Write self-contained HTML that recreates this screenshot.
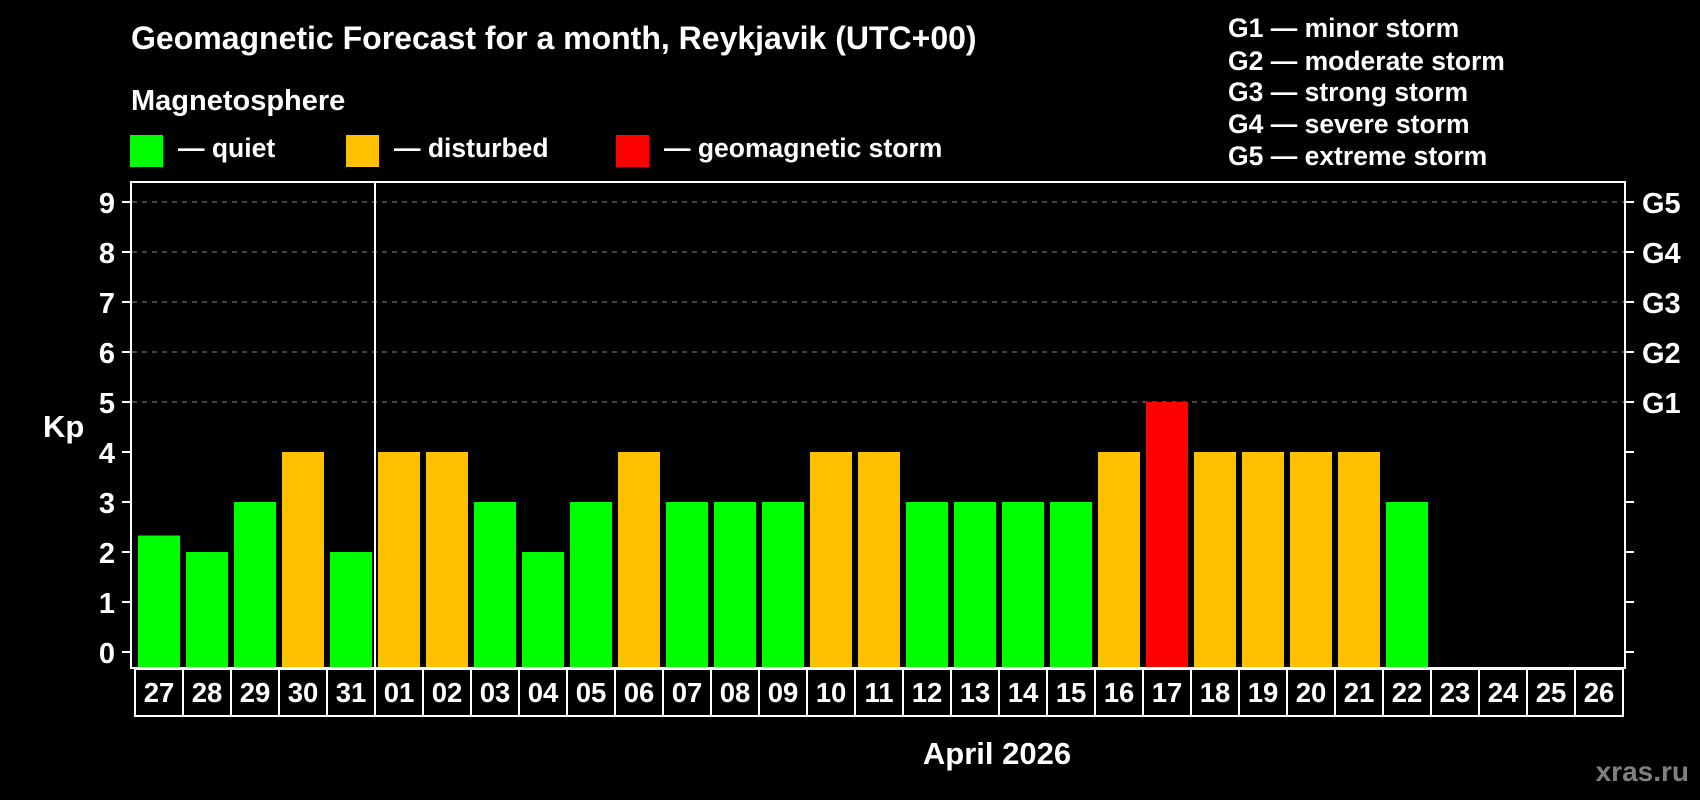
<!DOCTYPE html>
<html><head><meta charset="utf-8"><style>
html,body{margin:0;padding:0;background:#000;}
svg{display:block}
text{font-family:"Liberation Sans",Arial,sans-serif;font-weight:bold;fill:#fff}
</style></head><body>
<svg width="1700" height="800" viewBox="0 0 1700 800" xmlns="http://www.w3.org/2000/svg">
<rect width="1700" height="800" fill="#000"/>
<text x="131" y="49" font-size="32">Geomagnetic Forecast for a month, Reykjavik (UTC+00)</text>
<text x="131" y="110" font-size="29">Magnetosphere</text>
<rect x="130" y="135" width="33" height="32" fill="#00ff00"/>
<text x="178" y="157" font-size="26.5">— quiet</text>
<rect x="346" y="135" width="33" height="32" fill="#ffc000"/>
<text x="394" y="157" font-size="26.5">— disturbed</text>
<rect x="616" y="135" width="33" height="32" fill="#ff0000"/>
<text x="664" y="157" font-size="26.5">— geomagnetic storm</text>
<g font-size="26.5">
<text x="1228" y="37">G1 — minor storm</text>
<text x="1228" y="70">G2 — moderate storm</text>
<text x="1228" y="101">G3 — strong storm</text>
<text x="1228" y="133">G4 — severe storm</text>
<text x="1228" y="165">G5 — extreme storm</text>
</g>
<g stroke="#888" stroke-width="1" stroke-dasharray="5,5">
<line x1="132" x2="1624" y1="202" y2="202"/>
<line x1="132" x2="1624" y1="252" y2="252"/>
<line x1="132" x2="1624" y1="302" y2="302"/>
<line x1="132" x2="1624" y1="352" y2="352"/>
<line x1="132" x2="1624" y1="402" y2="402"/>
</g>
<g>
<rect x="138" y="535.5" width="42" height="132.5" fill="#00ff00"/>
<rect x="186" y="552" width="42" height="116" fill="#00ff00"/>
<rect x="234" y="502" width="42" height="166" fill="#00ff00"/>
<rect x="282" y="452" width="42" height="216" fill="#ffc000"/>
<rect x="330" y="552" width="42" height="116" fill="#00ff00"/>
<rect x="378" y="452" width="42" height="216" fill="#ffc000"/>
<rect x="426" y="452" width="42" height="216" fill="#ffc000"/>
<rect x="474" y="502" width="42" height="166" fill="#00ff00"/>
<rect x="522" y="552" width="42" height="116" fill="#00ff00"/>
<rect x="570" y="502" width="42" height="166" fill="#00ff00"/>
<rect x="618" y="452" width="42" height="216" fill="#ffc000"/>
<rect x="666" y="502" width="42" height="166" fill="#00ff00"/>
<rect x="714" y="502" width="42" height="166" fill="#00ff00"/>
<rect x="762" y="502" width="42" height="166" fill="#00ff00"/>
<rect x="810" y="452" width="42" height="216" fill="#ffc000"/>
<rect x="858" y="452" width="42" height="216" fill="#ffc000"/>
<rect x="906" y="502" width="42" height="166" fill="#00ff00"/>
<rect x="954" y="502" width="42" height="166" fill="#00ff00"/>
<rect x="1002" y="502" width="42" height="166" fill="#00ff00"/>
<rect x="1050" y="502" width="42" height="166" fill="#00ff00"/>
<rect x="1098" y="452" width="42" height="216" fill="#ffc000"/>
<rect x="1146" y="402" width="42" height="266" fill="#ff0000"/>
<rect x="1194" y="452" width="42" height="216" fill="#ffc000"/>
<rect x="1242" y="452" width="42" height="216" fill="#ffc000"/>
<rect x="1290" y="452" width="42" height="216" fill="#ffc000"/>
<rect x="1338" y="452" width="42" height="216" fill="#ffc000"/>
<rect x="1386" y="502" width="42" height="166" fill="#00ff00"/>
</g>
<rect x="131" y="182" width="1494" height="486" fill="none" stroke="#fff" stroke-width="2"/>
<line x1="375" x2="375" y1="182" y2="716" stroke="#fff" stroke-width="2"/>
<g stroke="#fff" stroke-width="2">
<line x1="122" x2="131" y1="652" y2="652"/><line x1="1625" x2="1634" y1="652" y2="652"/>
<line x1="122" x2="131" y1="602" y2="602"/><line x1="1625" x2="1634" y1="602" y2="602"/>
<line x1="122" x2="131" y1="552" y2="552"/><line x1="1625" x2="1634" y1="552" y2="552"/>
<line x1="122" x2="131" y1="502" y2="502"/><line x1="1625" x2="1634" y1="502" y2="502"/>
<line x1="122" x2="131" y1="452" y2="452"/><line x1="1625" x2="1634" y1="452" y2="452"/>
<line x1="122" x2="131" y1="402" y2="402"/><line x1="1625" x2="1634" y1="402" y2="402"/>
<line x1="122" x2="131" y1="352" y2="352"/><line x1="1625" x2="1634" y1="352" y2="352"/>
<line x1="122" x2="131" y1="302" y2="302"/><line x1="1625" x2="1634" y1="302" y2="302"/>
<line x1="122" x2="131" y1="252" y2="252"/><line x1="1625" x2="1634" y1="252" y2="252"/>
<line x1="122" x2="131" y1="202" y2="202"/><line x1="1625" x2="1634" y1="202" y2="202"/>
</g>
<g font-size="29" text-anchor="end">
<text x="115" y="663">0</text><text x="115" y="613">1</text><text x="115" y="563">2</text>
<text x="115" y="513">3</text><text x="115" y="463">4</text><text x="115" y="413">5</text>
<text x="115" y="363">6</text><text x="115" y="313">7</text><text x="115" y="263">8</text>
<text x="115" y="213">9</text>
</g>
<g font-size="29">
<text x="1642" y="413">G1</text><text x="1642" y="363">G2</text><text x="1642" y="313">G3</text>
<text x="1642" y="263">G4</text><text x="1642" y="213">G5</text>
</g>
<text x="43" y="437" font-size="31">Kp</text>
<g fill="none" stroke="#fff" stroke-width="2">
<rect x="135" y="669" width="1488" height="47"/>
<line x1="183" x2="183" y1="669" y2="716"/><line x1="231" x2="231" y1="669" y2="716"/>
<line x1="279" x2="279" y1="669" y2="716"/><line x1="327" x2="327" y1="669" y2="716"/>
<line x1="423" x2="423" y1="669" y2="716"/><line x1="471" x2="471" y1="669" y2="716"/>
<line x1="519" x2="519" y1="669" y2="716"/><line x1="567" x2="567" y1="669" y2="716"/>
<line x1="615" x2="615" y1="669" y2="716"/><line x1="663" x2="663" y1="669" y2="716"/>
<line x1="711" x2="711" y1="669" y2="716"/><line x1="759" x2="759" y1="669" y2="716"/>
<line x1="807" x2="807" y1="669" y2="716"/><line x1="855" x2="855" y1="669" y2="716"/>
<line x1="903" x2="903" y1="669" y2="716"/><line x1="951" x2="951" y1="669" y2="716"/>
<line x1="999" x2="999" y1="669" y2="716"/><line x1="1047" x2="1047" y1="669" y2="716"/>
<line x1="1095" x2="1095" y1="669" y2="716"/><line x1="1143" x2="1143" y1="669" y2="716"/>
<line x1="1191" x2="1191" y1="669" y2="716"/><line x1="1239" x2="1239" y1="669" y2="716"/>
<line x1="1287" x2="1287" y1="669" y2="716"/><line x1="1335" x2="1335" y1="669" y2="716"/>
<line x1="1383" x2="1383" y1="669" y2="716"/><line x1="1431" x2="1431" y1="669" y2="716"/>
<line x1="1479" x2="1479" y1="669" y2="716"/><line x1="1527" x2="1527" y1="669" y2="716"/>
<line x1="1575" x2="1575" y1="669" y2="716"/>
</g>
<g font-size="27.5" text-anchor="middle">
<text x="159" y="702">27</text><text x="207" y="702">28</text><text x="255" y="702">29</text>
<text x="303" y="702">30</text><text x="351" y="702">31</text><text x="399" y="702">01</text>
<text x="447" y="702">02</text><text x="495" y="702">03</text><text x="543" y="702">04</text>
<text x="591" y="702">05</text><text x="639" y="702">06</text><text x="687" y="702">07</text>
<text x="735" y="702">08</text><text x="783" y="702">09</text><text x="831" y="702">10</text>
<text x="879" y="702">11</text><text x="927" y="702">12</text><text x="975" y="702">13</text>
<text x="1023" y="702">14</text><text x="1071" y="702">15</text><text x="1119" y="702">16</text>
<text x="1167" y="702">17</text><text x="1215" y="702">18</text><text x="1263" y="702">19</text>
<text x="1311" y="702">20</text><text x="1359" y="702">21</text><text x="1407" y="702">22</text>
<text x="1455" y="702">23</text><text x="1503" y="702">24</text><text x="1551" y="702">25</text>
<text x="1599" y="702">26</text>
</g>
<text x="997" y="764" font-size="31" text-anchor="middle">April 2026</text>
<text x="1689" y="781" font-size="28" text-anchor="end" style="fill:#808080">xras.ru</text>
</svg>
</body></html>
